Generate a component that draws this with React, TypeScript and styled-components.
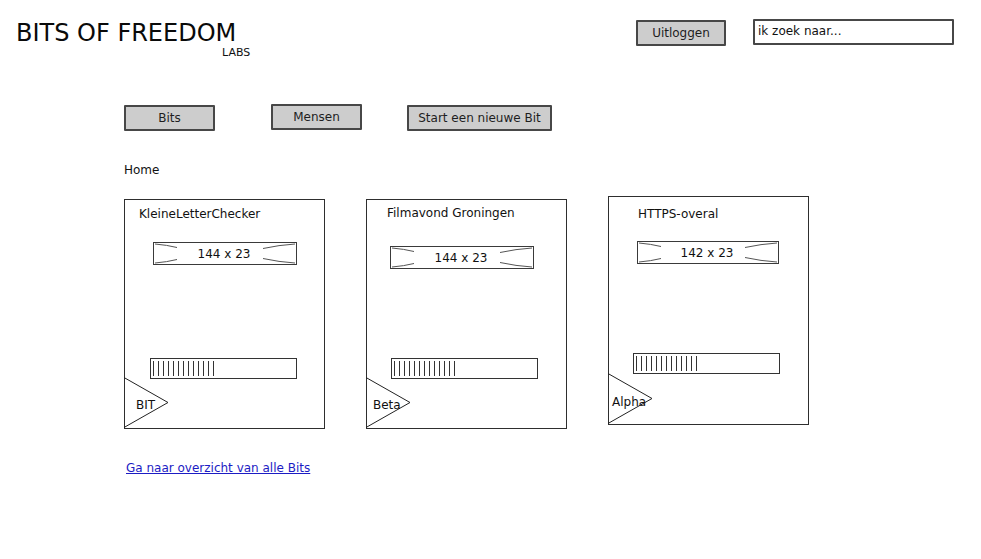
import styled, { createGlobalStyle } from 'styled-components'

const GlobalStyle = createGlobalStyle`
  html, body {
    margin: 0;
    padding: 0;
    background: #ffffff;
  }
  body {
    font-family: 'DejaVu Sans', 'Liberation Sans', sans-serif;
    font-size: 12px;
    color: #1e1e1e;
  }
`

interface IBit {
  title: string
  size: string
  stage: string
  shift: number
  titleTop: number
  titleLeft: number
  imgTop: number
  imgLeft: number
  imgWidth: number
  barTop: number
  barLeft: number
  stageLeft: number
  stageBottom: number
  height: number
}

const bits: IBit[] = [
  {
    title: 'KleineLetterChecker',
    size: '144 x 23',
    stage: 'BIT',
    shift: 3,
    titleTop: 7,
    titleLeft: 14,
    imgTop: 21,
    imgLeft: 29,
    imgWidth: 144,
    barTop: 93,
    barLeft: 26,
    stageLeft: 12,
    stageBottom: 17,
    height: 230,
  },
  {
    title: 'Filmavond Groningen',
    size: '144 x 23',
    stage: 'Beta',
    shift: 3,
    titleTop: 6,
    titleLeft: 20,
    imgTop: 26,
    imgLeft: 24,
    imgWidth: 144,
    barTop: 89,
    barLeft: 25,
    stageLeft: 7,
    stageBottom: 17,
    height: 230,
  },
  {
    title: 'HTTPS-overal',
    size: '142 x 23',
    stage: 'Alpha',
    shift: 0,
    titleTop: 10,
    titleLeft: 29,
    imgTop: 20,
    imgLeft: 29,
    imgWidth: 142,
    barTop: 89,
    barLeft: 25,
    stageLeft: 4,
    stageBottom: 16,
    height: 229,
  },
]

export default function App() {
  return (
    <Page>
      <GlobalStyle />
      <Header>
        <Brand>
          <BrandName>BITS OF FREEDOM</BrandName>
          <BrandSub>LABS</BrandSub>
        </Brand>
        <Actions>
          <Button $width={90} $shift={1}>Uitloggen</Button>
          <Search readOnly value="ik zoek naar..." />
        </Actions>
      </Header>

      <Nav>
        <Button $width={91} $shift={1}>Bits</Button>
        <Button $width={91} $gap={56}>Mensen</Button>
        <Button $width={145} $gap={45} $shift={1}>Start een nieuwe Bit</Button>
      </Nav>

      <Crumb>Home</Crumb>

      <CardRow>
        {bits.map((bit) => (
          <Card key={bit.title} $shift={bit.shift} $height={bit.height}>
            <CardTitle $top={bit.titleTop} $left={bit.titleLeft}>
              {bit.title}
            </CardTitle>
            <ImagePlaceholder $top={bit.imgTop} $left={bit.imgLeft} $width={bit.imgWidth}>
              <svg width={bit.imgWidth} height={23} viewBox={`0 0 ${bit.imgWidth} 23`}>
                <path d="M2 2 Q14 3 24 5.5" />
                <path d="M2 21 Q14 20 24 17.5" />
                <path d={`M${bit.imgWidth - 2} 2 Q${bit.imgWidth - 18} 3 ${bit.imgWidth - 34} 6.5`} />
                <path d={`M${bit.imgWidth - 2} 21 Q${bit.imgWidth - 18} 20 ${bit.imgWidth - 34} 16.5`} />
              </svg>
              <SizeLabel>{bit.size}</SizeLabel>
            </ImagePlaceholder>
            <ProgressBar $top={bit.barTop} $left={bit.barLeft}>
              <Ticks />
            </ProgressBar>
            <StageBadge>
              <svg width={46} height={52} viewBox="0 0 46 52">
                <polyline points="0,0.5 44,25.5 0,50.5" />
              </svg>
              <StageLabel $left={bit.stageLeft} $bottom={bit.stageBottom}>
                {bit.stage}
              </StageLabel>
            </StageBadge>
          </Card>
        ))}
      </CardRow>

      <OverviewLink href="#">Ga naar overzicht van alle Bits</OverviewLink>
    </Page>
  )
}

const Page = styled.div`
  width: 981px;
  min-height: 559px;
  display: flex;
  flex-direction: column;
  align-items: flex-start;
`

const Header = styled.header`
  align-self: stretch;
  display: flex;
  align-items: flex-start;
  padding: 19px 27px 0 16px;
`

const Brand = styled.div`
  display: flex;
  flex-direction: column;
`

const BrandName = styled.h1`
  margin: 0;
  font-size: 24px;
  font-weight: normal;
  line-height: 28px;
  color: #0a0a0a;
`

const BrandSub = styled.span`
  margin: -1px 0 0 206px;
  font-size: 11px;
  line-height: 13px;
  color: #111;
`

const Actions = styled.div`
  margin-left: auto;
  display: flex;
  align-items: flex-start;
  gap: 27px;
`

const Button = styled.button<{ $width: number; $gap?: number; $shift?: number }>`
  width: ${(p) => p.$width}px;
  height: 26px;
  margin-left: ${(p) => p.$gap ?? 0}px;
  margin-top: ${(p) => p.$shift ?? 0}px;
  padding: 0;
  box-sizing: border-box;
  background: #cdcdcd;
  border: 2px solid #474747;
  border-radius: 1px;
  font-family: 'DejaVu Sans', 'Liberation Sans', sans-serif;
  font-size: 12px;
  color: #1e1e1e;
`

const Search = styled.input`
  width: 201px;
  height: 26px;
  box-sizing: border-box;
  margin: 0;
  padding: 0 0 3px 3px;
  border: 2px solid #474747;
  border-radius: 1px;
  background: #fff;
  font-family: 'DejaVu Sans', 'Liberation Sans', sans-serif;
  font-size: 12px;
  color: #111;
  outline: none;
`

const Nav = styled.nav`
  display: flex;
  align-items: flex-start;
  margin: 45px 0 0 124px;
`

const Crumb = styled.div`
  margin: 32px 0 0 124px;
  line-height: 14px;
  color: #111;
`

const CardRow = styled.div`
  display: flex;
  align-items: flex-start;
  gap: 41px;
  margin: 19px 0 0 124px;
`

const Card = styled.div<{ $shift: number; $height: number }>`
  position: relative;
  width: 201px;
  height: ${(p) => p.$height}px;
  margin-top: ${(p) => p.$shift}px;
  box-sizing: border-box;
  border: 1px solid #2e2e2e;
  display: flex;
  flex-direction: column;
  align-items: flex-start;
`

const CardTitle = styled.div<{ $top: number; $left: number }>`
  margin: ${(p) => p.$top}px 0 0 ${(p) => p.$left}px;
  line-height: 14px;
  color: #111;
`

const ImagePlaceholder = styled.div<{ $top: number; $left: number; $width: number }>`
  position: relative;
  width: ${(p) => p.$width}px;
  height: 23px;
  margin: ${(p) => p.$top}px 0 0 ${(p) => p.$left - 1}px;
  box-sizing: border-box;
  border: 1px solid #3a3a3a;
  display: grid;
  place-items: center;

  & svg {
    position: absolute;
    left: -1px;
    top: -1px;
    fill: none;
    stroke: #555;
    stroke-width: 1;
  }
`

const SizeLabel = styled.span`
  position: relative;
  font-size: 12px;
  line-height: 14px;
  color: #111;
  padding-right: 2px;
`

const ProgressBar = styled.div<{ $top: number; $left: number }>`
  width: 147px;
  height: 21px;
  margin: ${(p) => p.$top}px 0 0 ${(p) => p.$left - 1}px;
  box-sizing: border-box;
  border: 1px solid #333;
  display: flex;
  align-items: center;
  padding-left: 2px;
`

const Ticks = styled.span`
  width: 65px;
  height: 15px;
  background: repeating-linear-gradient(90deg, #333 0 1px, transparent 1px 5px);
`

const StageBadge = styled.div`
  position: absolute;
  left: -1px;
  bottom: -1px;
  width: 46px;
  height: 52px;

  & svg {
    display: block;
    fill: none;
    stroke: #222;
    stroke-width: 1;
  }
`

const StageLabel = styled.span<{ $left: number; $bottom: number }>`
  position: absolute;
  left: ${(p) => p.$left}px;
  bottom: ${(p) => p.$bottom}px;
  font-size: 12px;
  line-height: 14px;
  color: #111;
`

const OverviewLink = styled.a`
  margin: 32px 0 0 126px;
  line-height: 14px;
  color: #1c1cc4;
  text-decoration: underline;
`
